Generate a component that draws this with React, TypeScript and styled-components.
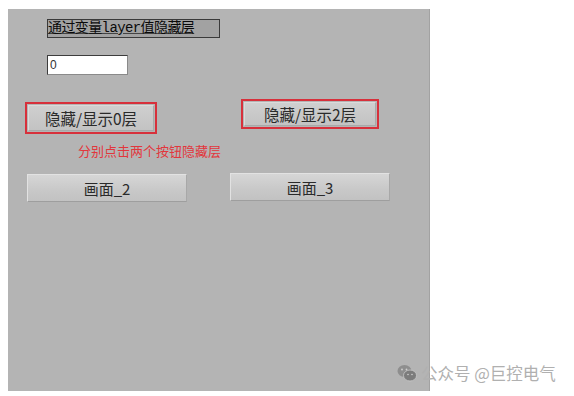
import React from "react";
import styled, { createGlobalStyle } from "styled-components";

const Global = createGlobalStyle`
  html, body { margin: 0; padding: 0; background: #ffffff; }
  body { font-family: "Noto Sans CJK SC", "Noto Sans", sans-serif; }
`;

const Page = styled.div`
  position: relative;
  width: 574px;
  height: 396px;
  padding: 9px 0 0 8px;
  box-sizing: border-box;
  overflow: hidden;
`;

const Panel = styled.div`
  width: 422px;
  height: 382px;
  background: #b4b4b4;
  border-right: 1px solid #a2a2a2;
  box-sizing: border-box;
  display: flex;
  flex-direction: column;
`;

const Row = styled.div<{ $top: number; $left: number; $gap?: number }>`
  display: flex;
  align-items: flex-start;
  margin-top: ${(p) => p.$top}px;
  padding-left: ${(p) => p.$left}px;
  gap: ${(p) => p.$gap ?? 0}px;
`;

const TitleLabel = styled.div`
  height: 19px;
  width: 173px;
  box-sizing: border-box;
  border: 1px solid #3a3a3a;
  background: #a2a2a2;
  color: #0a0a0a;
  font-family: "Liberation Mono", "Noto Sans CJK SC", monospace;
  font-size: 14px;
  line-height: 17px;
  white-space: nowrap;
  overflow: hidden;
  text-decoration: underline;
  text-decoration-color: #444;
  letter-spacing: -0.6px;
`;

const ValueInput = styled.div`
  width: 81px;
  height: 20px;
  box-sizing: border-box;
  background: #ffffff;
  border: 1px solid #3c3c3c;
  border-right-color: #8a8a8a;
  border-bottom-color: #8a8a8a;
  font-family: "Liberation Sans", sans-serif;
  font-size: 12px;
  line-height: 18px;
  padding-left: 2px;
  color: #333;
`;

const RedFrame = styled.div<{ $w: number; $h: number; $ml?: number; $mt?: number }>`
  width: ${(p) => p.$w}px;
  height: ${(p) => p.$h}px;
  margin-left: ${(p) => p.$ml ?? 0}px;
  margin-top: ${(p) => p.$mt ?? 0}px;
  box-sizing: border-box;
  border: 2px solid #d7303b;
  padding: 1px;
  display: flex;
`;

const LayerButton = styled.div`
  flex: 1;
  background: linear-gradient(#cfcfcf, #c3c3c3);
  border: 1px solid #dadada;
  border-bottom-color: #a9a9a9;
  border-right-color: #a9a9a9;
  display: flex;
  align-items: center;
  justify-content: center;
  font-size: 15.5px;
  color: #2a2a2a;
  font-family: "Noto Sans CJK SC", sans-serif;
`;

const Hint = styled.div`
  color: #e2363c;
  font-size: 13px;
  line-height: 14px;
  white-space: nowrap;
`;

const ScreenButton = styled.div<{ $ml?: number; $mt?: number }>`
  width: 160px;
  height: 28px;
  margin-left: ${(p) => p.$ml ?? 0}px;
  margin-top: ${(p) => p.$mt ?? 0}px;
  box-sizing: border-box;
  background: linear-gradient(#d6d6d6, #c8c8c8 60%, #c2c2c2);
  border: 1px solid #e2e2e2;
  border-bottom-color: #9e9e9e;
  border-right-color: #a8a8a8;
  display: flex;
  align-items: center;
  justify-content: center;
  font-size: 15px;
  color: #2a2a2a;
  font-family: "Noto Sans CJK SC", sans-serif;
`;

const Watermark = styled.div`
  position: absolute;
  left: 397px;
  top: 361px;
  display: flex;
  align-items: center;
  gap: 4px;
  color: #b0b0b0;
  font-size: 16.5px;
  white-space: nowrap;
`;

const WeChatIcon = () => (
  <svg width="20" height="18" viewBox="0 0 20 18">
    <ellipse cx="7.5" cy="7" rx="7" ry="6" fill="#8e8e8e" />
    <ellipse cx="13" cy="11.5" rx="6.5" ry="5.5" fill="#7c7c7c" stroke="#c9c9c9" strokeWidth="0.8" />
    <circle cx="5" cy="5.5" r="0.9" fill="#d0d0d0" />
    <circle cx="9.5" cy="5.5" r="0.9" fill="#d0d0d0" />
    <circle cx="11" cy="10.5" r="0.8" fill="#d0d0d0" />
    <circle cx="15" cy="10.5" r="0.8" fill="#d0d0d0" />
  </svg>
);

export default function App() {
  return (
    <>
      <Global />
      <Page>
        <Panel>
          <Row $top={10} $left={39}>
            <TitleLabel>通过变量layer值隐藏层</TitleLabel>
          </Row>
          <Row $top={17} $left={39}>
            <ValueInput>0</ValueInput>
          </Row>
          <Row $top={24} $left={17}>
            <RedFrame $w={132} $h={32} $mt={3}>
              <LayerButton>隐藏/显示0层</LayerButton>
            </RedFrame>
            <RedFrame $w={138} $h={30} $ml={84}>
              <LayerButton>隐藏/显示2层</LayerButton>
            </RedFrame>
          </Row>
          <Row $top={10} $left={70}>
            <Hint>分别点击两个按钮隐藏层</Hint>
          </Row>
          <Row $top={15} $left={19}>
            <ScreenButton $mt={1}>画面_2</ScreenButton>
            <ScreenButton $ml={43}>画面_3</ScreenButton>
          </Row>
        </Panel>
        <Watermark>
          <WeChatIcon />
          <span>公众号 @巨控电气</span>
        </Watermark>
      </Page>
    </>
  );
}
